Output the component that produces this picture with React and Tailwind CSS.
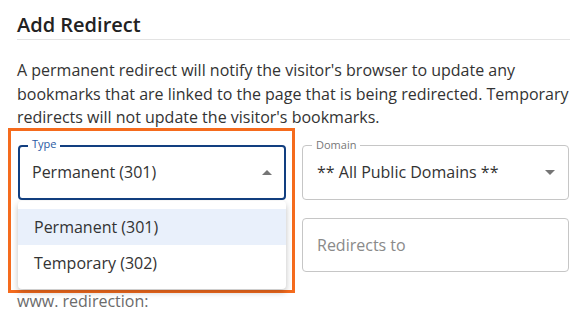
import { useState } from 'react'

const TYPES = ['Permanent (301)', 'Temporary (302)']

function Caret({ up }) {
  return (
    <svg width="10" height="5" viewBox="0 0 10 5" className="shrink-0">
      <path d={up ? 'M0 5 L5 0 L10 5 Z' : 'M0 0 L5 5 L10 0 Z'} fill="#757575" />
    </svg>
  )
}

export default function App() {
  const [type] = useState(TYPES[0])

  return (
    <div className="relative w-[587px] h-[311px] overflow-hidden bg-white font-['Open_Sans',sans-serif] text-[#222]">
      <div className="pl-[17px] pr-[17px] pt-[12px]">
        {/* Heading */}
        <h2 className="text-[20px] font-semibold leading-[26px] pb-[1px] border-b border-[#e3e3e3]">Add Redirect</h2>

        <p className="mt-[19px] text-[16px] leading-[23.5px] text-[#333]">
          A permanent redirect will notify the visitor's browser to update any bookmarks that are linked to the page that is being redirected. Temporary redirects will not update the visitor's bookmarks.
        </p>

        <div className="mt-[15px] pl-[1px] grid grid-cols-[268px_267px] gap-x-[16px] gap-y-[18px]">
          {/* Type select (open) */}
          <div className="relative">
            <div className="h-[55px] rounded-[4px] border-2 border-[#123f80] flex items-center justify-between pl-[12px] pr-[12px]">
              <span className="text-[16px] text-[#333]">{type}</span>
              <Caret up />
            </div>
            <span className="absolute left-[10px] -top-[8px] px-[4px] bg-white text-[11px] leading-[14px] text-[#2a5aa3]">Type</span>

            <div className="absolute z-10 left-0 top-[56px] w-[268px] py-[8px] bg-white rounded-[4px] shadow-[0_3px_6px_rgba(0,0,0,0.25)]">
              {TYPES.map((t, i) => (
                <div key={t} className={`h-[36px] flex items-center pl-[16px] text-[16px] text-[#333] ${i === 0 ? 'bg-[#e9f0fb]' : ''}`}>
                  {t}
                </div>
              ))}
            </div>
          </div>

          {/* Domain select */}
          <div className="relative">
            <div className="h-[55px] rounded-[4px] border border-[#c6c6c6] flex items-center justify-between pl-[14px] pr-[13px]">
              <span className="text-[16px] text-[#333]">** All Public Domains **</span>
              <Caret />
            </div>
            <span className="absolute left-[10px] -top-[7px] px-[4px] bg-white text-[11px] leading-[14px] text-[#777]">Domain</span>
          </div>

          <div />

          <div className="h-[54px] rounded-[4px] border border-[#c6c6c6] flex items-center pl-[14px]">
            <span className="text-[16px] text-[#8a8a8a]">Redirects to</span>
          </div>
        </div>

        <p className="mt-[18px] text-[16px] leading-[22px] text-[#6b6b6b]">www. redirection:</p>
      </div>

      {/* highlight annotation */}
      <div className="absolute left-[8px] top-[128px] w-[287px] h-[165px] border-[3px] border-[#f56b1d] pointer-events-none" />
    </div>
  )
}
